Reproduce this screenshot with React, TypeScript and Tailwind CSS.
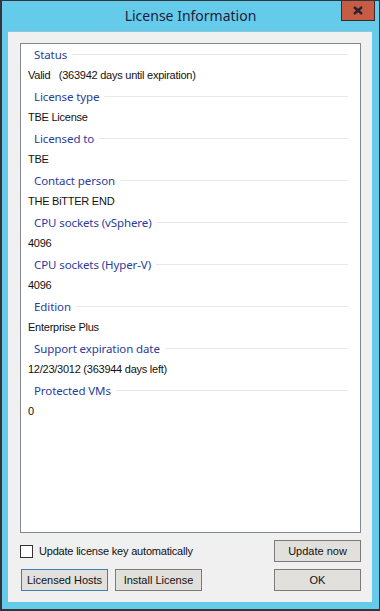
import React from "react";

const sections: [string, string][] = [
  ["Status", "Valid   (363942 days until expiration)"],
  ["License type", "TBE License"],
  ["Licensed to", "TBE"],
  ["Contact person", "THE BiTTER END"],
  ["CPU sockets (vSphere)", "4096"],
  ["CPU sockets (Hyper-V)", "4096"],
  ["Edition", "Enterprise Plus"],
  ["Support expiration date", "12/23/3012 (363944 days left)"],
  ["Protected VMs", "0"],
];

const uiFont = { fontFamily: '"Noto Sans", "Open Sans", sans-serif' };
const formFont = { fontFamily: '"Liberation Sans", Arial, sans-serif' };

const WinButton: React.FC<{ label: string; focused?: boolean; className?: string }> = ({
  label,
  focused,
  className = "",
}) => (
  <button
    type="button"
    className={`h-[22px] w-[87px] flex items-center justify-center bg-[#e1e0dc] text-[11px] text-[#111] border ${
      focused ? "border-[#3c7fb1]" : "border-[#7a7a7a]"
    } ${className}`}
    style={formFont}
  >
    {label}
  </button>
);

export default function App() {
  return (
    <div className="w-[380px] h-[611px] bg-[#65cbea] border-l-2 border-r border-t border-b-2 border-[#34343c] flex flex-col overflow-hidden">
      {/* Title bar */}
      <div className="h-[30px] grid grid-cols-[1fr_auto_1fr] items-start">
        <div />
        <div
          className="h-[28px] flex items-center text-[14px] text-[#1e1c3a]"
          style={uiFont}
        >
          License Information
        </div>
        <div className="flex justify-end">
          <button
            type="button"
            className="-mt-px mr-[4px] w-[34px] h-[21px] bg-[#c75c45] border border-[#3a2a2a] flex items-center justify-center"
          >
            <svg width="10" height="9" viewBox="0 0 10 9">
              <path d="M1 1 L9 8 M9 1 L1 8" stroke="#2a2230" strokeWidth="2.4" />
            </svg>
          </button>
        </div>
      </div>

      {/* Client area */}
      <div className="ml-[6px] w-[364px] h-[571px] bg-[#f0f0f0] border-t border-[#8cc6dc] flex flex-col pl-[12px] pt-[11px]">
        <div className="w-[341px] h-[490px] bg-white border border-[#828790] flex flex-col">
          {sections.map(([title, value]) => (
            <div key={title}>
              <div className="h-[21px] flex items-center gap-[5px] pl-[13px] pr-[12px]">
                <span
                  className="text-[11.5px] tracking-[-0.1px] text-[#2a3c9c] whitespace-nowrap"
                  style={uiFont}
                >
                  {title}
                </span>
                <div className="flex-1 h-px bg-[#e8e8e8]" />
              </div>
              <div
                className="h-[21px] flex items-center pl-[7px] text-[11px] tracking-[-0.25px] text-[#111] whitespace-pre"
                style={formFont}
              >
                {value}
              </div>
            </div>
          ))}
        </div>

        <div className="w-[341px] mt-[7px] flex items-center justify-between">
          <label className="flex items-center gap-[6px]">
            <span className="w-[13px] h-[13px] border border-[#333] bg-white" />
            <span className="text-[11px] tracking-[-0.2px] text-[#111]" style={formFont}>
              Update license key automatically
            </span>
          </label>
          <WinButton label="Update now" />
        </div>

        <div className="w-[341px] mt-[7px] flex items-center">
          <WinButton label="Licensed Hosts" focused className="ml-px" />
          <WinButton label="Install License" className="ml-[7px]" />
          <div className="flex-1" />
          <WinButton label="OK" />
        </div>
      </div>
    </div>
  );
}
